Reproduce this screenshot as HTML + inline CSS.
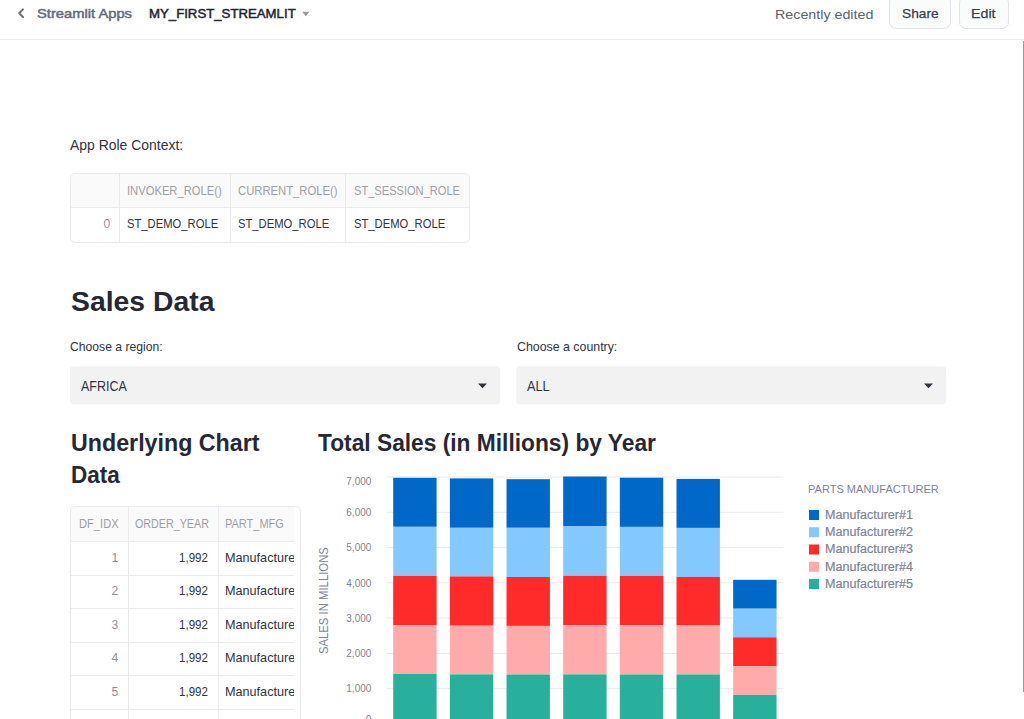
<!DOCTYPE html>
<html lang="en">
<head>
<meta charset="utf-8">
<title>MY_FIRST_STREAMLIT</title>
<style>
html,body{margin:0;padding:0;background:#fff;}
body{width:1024px;height:719px;position:relative;overflow:hidden;font-family:"Liberation Sans", sans-serif;}
.t{position:absolute;white-space:nowrap;display:block;transform-origin:0 50%;}
.abs{position:absolute;}
.hdr{left:0;top:0;width:1024px;height:39px;border-bottom:1px solid #e9ebee;background:#fff;}
.btn{top:-4px;height:31px;background:#fafbfb;border:1px solid #e1e4e8;border-radius:7px;}
.tbl{border:1px solid #e9eaed;border-radius:5px;background:#fff;overflow:hidden;box-sizing:border-box;}
.th{background:#fafafa;}
.ln{background:#ebebee;}
.sel{background:#f2f2f2;border-radius:3px;}
</style>
</head>
<body>
<div class="abs hdr"></div>
<svg class="abs" style="left:16px;top:7px" width="12" height="14" viewBox="0 0 12 14"><path d="M7.0 2.4 L3.2 6.2 L7.0 10.0" fill="none" stroke="#696e77" stroke-width="2" stroke-linecap="round" stroke-linejoin="round"/></svg>
<svg class="abs" style="left:302px;top:11px" width="8" height="6" viewBox="0 0 8 6"><path d="M0.2 0.7 H7.4 L3.8 5.3 Z" fill="#9299a2"/></svg>
<div class="abs btn" style="left:889px;width:60px;"></div>
<div class="abs btn" style="left:959px;width:48px;"></div>
<div class="abs" style="left:1023px;top:41px;width:1px;height:651px;background:#9a9b9e;"></div>

<div class="abs tbl" style="left:70px;top:173px;width:400px;height:70px;">
 <div class="abs th" style="left:0;top:0;width:400px;height:33px;"></div>
 <div class="abs ln" style="left:0;top:33px;width:400px;height:1px;"></div>
 <div class="abs ln" style="left:48px;top:0;width:1px;height:70px;"></div>
 <div class="abs ln" style="left:159px;top:0;width:1px;height:70px;"></div>
 <div class="abs ln" style="left:274px;top:0;width:1px;height:70px;"></div>
</div>

<svg class="abs" style="left:0;top:360px" width="1024" height="50" viewBox="0 360 1024 50"><rect x="70" y="366.35" width="430.2" height="38" rx="3.5" fill="#f2f2f2"/><rect x="516.3" y="366.35" width="429.9" height="38" rx="3.5" fill="#f2f2f2"/></svg>
<svg class="abs" style="left:477px;top:383px" width="11" height="6" viewBox="0 0 11 6"><path d="M1 0.6 H10 L5.5 5.2 Z" fill="#31333f"/></svg>
<svg class="abs" style="left:923px;top:383px" width="11" height="6" viewBox="0 0 11 6"><path d="M1 0.6 H10 L5.5 5.2 Z" fill="#31333f"/></svg>

<div class="abs tbl" style="left:70px;top:506px;width:231px;height:230px;">
 <div class="abs th" style="left:0;top:0;width:223px;height:34px;"></div>
 <div class="abs ln" style="left:56.5px;top:0;width:1px;height:230px;"></div>
 <div class="abs ln" style="left:146.5px;top:0;width:1px;height:230px;"></div>
 <div class="abs ln" style="left:0;top:34px;width:223px;height:1px;"></div>
 <div class="abs ln" style="left:0;top:67.5px;width:223px;height:1px;"></div>
 <div class="abs ln" style="left:0;top:101px;width:223px;height:1px;"></div>
 <div class="abs ln" style="left:0;top:134.5px;width:223px;height:1px;"></div>
 <div class="abs ln" style="left:0;top:168px;width:223px;height:1px;"></div>
 <div class="abs ln" style="left:0;top:201.5px;width:223px;height:1px;"></div>
</div>
<svg id="chart" width="1024" height="719" viewBox="0 0 1024 719" style="position:absolute;left:0;top:0" font-family='"Liberation Sans", sans-serif'>
<line x1="386.6" x2="783.4" y1="724.0" y2="724.0" stroke="#e6eaf1" stroke-width="1"/>
<line x1="386.6" x2="783.4" y1="688.7" y2="688.7" stroke="#e6eaf1" stroke-width="1"/>
<line x1="386.6" x2="783.4" y1="653.4" y2="653.4" stroke="#e6eaf1" stroke-width="1"/>
<line x1="386.6" x2="783.4" y1="618.1" y2="618.1" stroke="#e6eaf1" stroke-width="1"/>
<line x1="386.6" x2="783.4" y1="582.8" y2="582.8" stroke="#e6eaf1" stroke-width="1"/>
<line x1="386.6" x2="783.4" y1="547.5" y2="547.5" stroke="#e6eaf1" stroke-width="1"/>
<line x1="386.6" x2="783.4" y1="512.3" y2="512.3" stroke="#e6eaf1" stroke-width="1"/>
<line x1="386.6" x2="783.4" y1="477.0" y2="477.0" stroke="#e6eaf1" stroke-width="1"/>
<rect x="393.20" y="477.8" width="43.4" height="49.0" fill="#0068c9"/>
<rect x="393.20" y="526.8" width="43.4" height="49.1" fill="#83c9ff"/>
<rect x="393.20" y="575.9" width="43.4" height="49.2" fill="#ff2b2b"/>
<rect x="393.20" y="625.1" width="43.4" height="48.9" fill="#ffabab"/>
<rect x="393.20" y="674.0" width="43.4" height="50.0" fill="#29b09d"/>
<rect x="449.86" y="478.4" width="43.4" height="49.4" fill="#0068c9"/>
<rect x="449.86" y="527.8" width="43.4" height="48.6" fill="#83c9ff"/>
<rect x="449.86" y="576.4" width="43.4" height="49.3" fill="#ff2b2b"/>
<rect x="449.86" y="625.7" width="43.4" height="48.7" fill="#ffabab"/>
<rect x="449.86" y="674.4" width="43.4" height="49.6" fill="#29b09d"/>
<rect x="506.52" y="479.2" width="43.4" height="48.6" fill="#0068c9"/>
<rect x="506.52" y="527.8" width="43.4" height="49.2" fill="#83c9ff"/>
<rect x="506.52" y="577.0" width="43.4" height="48.9" fill="#ff2b2b"/>
<rect x="506.52" y="625.9" width="43.4" height="48.6" fill="#ffabab"/>
<rect x="506.52" y="674.5" width="43.4" height="49.5" fill="#29b09d"/>
<rect x="563.18" y="476.5" width="43.4" height="49.9" fill="#0068c9"/>
<rect x="563.18" y="526.4" width="43.4" height="49.4" fill="#83c9ff"/>
<rect x="563.18" y="575.8" width="43.4" height="49.3" fill="#ff2b2b"/>
<rect x="563.18" y="625.1" width="43.4" height="49.3" fill="#ffabab"/>
<rect x="563.18" y="674.4" width="43.4" height="49.6" fill="#29b09d"/>
<rect x="619.84" y="477.7" width="43.4" height="49.2" fill="#0068c9"/>
<rect x="619.84" y="526.9" width="43.4" height="49.0" fill="#83c9ff"/>
<rect x="619.84" y="575.9" width="43.4" height="49.2" fill="#ff2b2b"/>
<rect x="619.84" y="625.1" width="43.4" height="49.4" fill="#ffabab"/>
<rect x="619.84" y="674.5" width="43.4" height="49.5" fill="#29b09d"/>
<rect x="676.50" y="478.9" width="43.4" height="49.0" fill="#0068c9"/>
<rect x="676.50" y="527.9" width="43.4" height="49.0" fill="#83c9ff"/>
<rect x="676.50" y="576.9" width="43.4" height="48.6" fill="#ff2b2b"/>
<rect x="676.50" y="625.5" width="43.4" height="49.0" fill="#ffabab"/>
<rect x="676.50" y="674.5" width="43.4" height="49.5" fill="#29b09d"/>
<rect x="733.16" y="579.8" width="43.4" height="28.9" fill="#0068c9"/>
<rect x="733.16" y="608.7" width="43.4" height="28.6" fill="#83c9ff"/>
<rect x="733.16" y="637.3" width="43.4" height="28.8" fill="#ff2b2b"/>
<rect x="733.16" y="666.1" width="43.4" height="28.8" fill="#ffabab"/>
<rect x="733.16" y="694.9" width="43.4" height="29.1" fill="#29b09d"/>
<text x="371.3" y="723.2" text-anchor="end" font-size="10.2" fill="#808495" textLength="5.6" lengthAdjust="spacingAndGlyphs">0</text>
<text x="371.3" y="692.4" text-anchor="end" font-size="10.2" fill="#808495" textLength="25" lengthAdjust="spacingAndGlyphs">1,000</text>
<text x="371.3" y="657.1" text-anchor="end" font-size="10.2" fill="#808495" textLength="25" lengthAdjust="spacingAndGlyphs">2,000</text>
<text x="371.3" y="621.8" text-anchor="end" font-size="10.2" fill="#808495" textLength="25" lengthAdjust="spacingAndGlyphs">3,000</text>
<text x="371.3" y="586.5" text-anchor="end" font-size="10.2" fill="#808495" textLength="25" lengthAdjust="spacingAndGlyphs">4,000</text>
<text x="371.3" y="551.2" text-anchor="end" font-size="10.2" fill="#808495" textLength="25" lengthAdjust="spacingAndGlyphs">5,000</text>
<text x="371.3" y="516.0" text-anchor="end" font-size="10.2" fill="#808495" textLength="25" lengthAdjust="spacingAndGlyphs">6,000</text>
<text x="371.3" y="484.8" text-anchor="end" font-size="10.2" fill="#808495" textLength="25" lengthAdjust="spacingAndGlyphs">7,000</text>
<text transform="translate(328.2,600.6) rotate(-90)" text-anchor="middle" font-size="12" fill="#808495" textLength="107" lengthAdjust="spacingAndGlyphs">SALES IN MILLIONS</text>
<text x="808" y="493.4" font-size="11.2" fill="#808495" textLength="130.8" lengthAdjust="spacingAndGlyphs">PARTS MANUFACTURER</text>
<rect x="809" y="510.00" width="10" height="10" fill="#0068c9"/>
<text x="825" y="518.80" font-size="12" fill="#808495" stroke="#808495" stroke-width="0.2" textLength="88" lengthAdjust="spacingAndGlyphs">Manufacturer#1</text>
<rect x="809" y="527.25" width="10" height="10" fill="#83c9ff"/>
<text x="825" y="536.05" font-size="12" fill="#808495" stroke="#808495" stroke-width="0.2" textLength="88" lengthAdjust="spacingAndGlyphs">Manufacturer#2</text>
<rect x="809" y="544.50" width="10" height="10" fill="#ff2b2b"/>
<text x="825" y="553.30" font-size="12" fill="#808495" stroke="#808495" stroke-width="0.2" textLength="88" lengthAdjust="spacingAndGlyphs">Manufacturer#3</text>
<rect x="809" y="561.75" width="10" height="10" fill="#ffabab"/>
<text x="825" y="570.55" font-size="12" fill="#808495" stroke="#808495" stroke-width="0.2" textLength="88" lengthAdjust="spacingAndGlyphs">Manufacturer#4</text>
<rect x="809" y="579.00" width="10" height="10" fill="#29b09d"/>
<text x="825" y="587.80" font-size="12" fill="#808495" stroke="#808495" stroke-width="0.2" textLength="88" lengthAdjust="spacingAndGlyphs">Manufacturer#5</text>
</svg>
<span class="t" id="t0" style="top:5.70px;font-size:13px;line-height:15.6px;color:#646c7a;left:37.00px;transform:scaleX(1.1333);-webkit-text-stroke:0.5px #646c7a;">Streamlit Apps</span>
<span class="t" id="t1" style="top:5.70px;font-size:13px;line-height:15.6px;color:#1f2630;left:149.20px;transform:scaleX(1.0154);-webkit-text-stroke:0.5px #1f2630;">MY_FIRST_STREAMLIT</span>
<span class="t" id="t2" style="top:7.00px;font-size:13px;line-height:15.6px;color:#5d6470;left:775.00px;transform:scaleX(1.0979);">Recently edited</span>
<span class="t" id="t3" style="top:5.70px;font-size:13px;line-height:15.6px;color:#39404b;left:901.80px;transform:scaleX(1.0547);-webkit-text-stroke:0.25px #39404b;">Share</span>
<span class="t" id="t4" style="top:5.70px;font-size:13px;line-height:15.6px;color:#39404b;left:971.40px;transform:scaleX(1.0934);-webkit-text-stroke:0.25px #39404b;">Edit</span>
<span class="t" id="t5" style="top:135.90px;font-size:15px;line-height:18.0px;color:#31333f;left:70.20px;transform:scaleX(0.9298);">App Role Context:</span>
<span class="t" id="t6" style="top:183.00px;font-size:13px;line-height:15.6px;color:#9fa0a7;left:127.00px;transform:scaleX(0.8624);">INVOKER_ROLE()</span>
<span class="t" id="t7" style="top:183.00px;font-size:13px;line-height:15.6px;color:#9fa0a7;left:238.00px;transform:scaleX(0.8664);">CURRENT_ROLE()</span>
<span class="t" id="t8" style="top:183.00px;font-size:13px;line-height:15.6px;color:#9fa0a7;left:353.50px;transform:scaleX(0.8529);">ST_SESSION_ROLE</span>
<span class="t" id="t9" style="top:215.70px;font-size:13px;line-height:15.6px;color:#8f9097;right:913.60px;transform:scaleX(0.93);transform-origin:100% 50%;">0</span>
<span class="t" id="t10" style="top:215.70px;font-size:13px;line-height:15.6px;color:#31333f;left:127.00px;transform:scaleX(0.8646);">ST_DEMO_ROLE</span>
<span class="t" id="t11" style="top:215.70px;font-size:13px;line-height:15.6px;color:#31333f;left:238.00px;transform:scaleX(0.8646);">ST_DEMO_ROLE</span>
<span class="t" id="t12" style="top:215.70px;font-size:13px;line-height:15.6px;color:#31333f;left:353.50px;transform:scaleX(0.8646);">ST_DEMO_ROLE</span>
<span class="t" id="t13" style="top:284.60px;font-size:28px;line-height:33.6px;color:#262833;font-weight:bold;left:71.40px;transform:scaleX(1.0131);">Sales Data</span>
<span class="t" id="t14" style="top:339.00px;font-size:13px;line-height:15.6px;color:#31333f;left:70.20px;transform:scaleX(0.9352);">Choose a region:</span>
<span class="t" id="t15" style="top:339.00px;font-size:13px;line-height:15.6px;color:#31333f;left:516.50px;transform:scaleX(0.9506);">Choose a country:</span>
<span class="t" id="t16" style="top:377.10px;font-size:15px;line-height:18.0px;color:#31333f;left:80.80px;transform:scaleX(0.8307);">AFRICA</span>
<span class="t" id="t17" style="top:377.10px;font-size:15px;line-height:18.0px;color:#31333f;left:526.50px;transform:scaleX(0.8426);">ALL</span>
<span class="t" id="t18" style="top:430.33px;font-size:23px;line-height:27.6px;color:#262833;font-weight:bold;left:71.30px;transform:scaleX(1.0103);">Underlying Chart</span>
<span class="t" id="t19" style="top:462.23px;font-size:23px;line-height:27.6px;color:#262833;font-weight:bold;left:71.30px;transform:scaleX(0.9788);">Data</span>
<span class="t" id="t20" style="top:430.43px;font-size:23px;line-height:27.6px;color:#262833;font-weight:bold;left:317.60px;transform:scaleX(0.9889);">Total Sales (in Millions) by Year</span>
<span class="t" id="t21" style="top:516.40px;font-size:13px;line-height:15.6px;color:#9fa0a7;left:79.00px;transform:scaleX(0.8565);">DF_IDX</span>
<span class="t" id="t22" style="top:516.40px;font-size:13px;line-height:15.6px;color:#9fa0a7;left:134.50px;transform:scaleX(0.8250);">ORDER_YEAR</span>
<span class="t" id="t23" style="top:516.40px;font-size:13px;line-height:15.6px;color:#9fa0a7;left:225.30px;transform:scaleX(0.8449);">PART_MFG</span>
<span class="t" id="t24" style="top:549.80px;font-size:13px;line-height:15.6px;color:#8f9097;right:905.90px;transform:scaleX(0.93);transform-origin:100% 50%;">1</span>
<span class="t" id="t25" style="top:549.80px;font-size:13px;line-height:15.6px;color:#31333f;left:179.10px;transform:scaleX(0.8880);">1,992</span>
<span class="t" id="t27" style="top:583.30px;font-size:13px;line-height:15.6px;color:#8f9097;right:905.90px;transform:scaleX(0.93);transform-origin:100% 50%;">2</span>
<span class="t" id="t28" style="top:583.30px;font-size:13px;line-height:15.6px;color:#31333f;left:179.10px;transform:scaleX(0.8880);">1,992</span>
<span class="t" id="t30" style="top:616.80px;font-size:13px;line-height:15.6px;color:#8f9097;right:905.90px;transform:scaleX(0.93);transform-origin:100% 50%;">3</span>
<span class="t" id="t31" style="top:616.80px;font-size:13px;line-height:15.6px;color:#31333f;left:179.10px;transform:scaleX(0.8880);">1,992</span>
<span class="t" id="t33" style="top:650.30px;font-size:13px;line-height:15.6px;color:#8f9097;right:905.90px;transform:scaleX(0.93);transform-origin:100% 50%;">4</span>
<span class="t" id="t34" style="top:650.30px;font-size:13px;line-height:15.6px;color:#31333f;left:179.10px;transform:scaleX(0.8880);">1,992</span>
<span class="t" id="t36" style="top:683.80px;font-size:13px;line-height:15.6px;color:#8f9097;right:905.90px;transform:scaleX(0.93);transform-origin:100% 50%;">5</span>
<span class="t" id="t37" style="top:683.80px;font-size:13px;line-height:15.6px;color:#31333f;left:179.10px;transform:scaleX(0.8880);">1,992</span>
<div class="abs" style="left:0;top:0;width:294.4px;height:719px;overflow:hidden;">
<span class="t" id="t26" style="top:549.80px;font-size:13px;line-height:15.6px;color:#31333f;left:225.30px;transform:scaleX(0.9719);">Manufacturer#1</span>
<span class="t" id="t29" style="top:583.30px;font-size:13px;line-height:15.6px;color:#31333f;left:225.30px;transform:scaleX(0.9719);">Manufacturer#1</span>
<span class="t" id="t32" style="top:616.80px;font-size:13px;line-height:15.6px;color:#31333f;left:225.30px;transform:scaleX(0.9719);">Manufacturer#1</span>
<span class="t" id="t35" style="top:650.30px;font-size:13px;line-height:15.6px;color:#31333f;left:225.30px;transform:scaleX(0.9719);">Manufacturer#1</span>
<span class="t" id="t38" style="top:683.80px;font-size:13px;line-height:15.6px;color:#31333f;left:225.30px;transform:scaleX(0.9719);">Manufacturer#1</span>
</div>
</body>
</html>
